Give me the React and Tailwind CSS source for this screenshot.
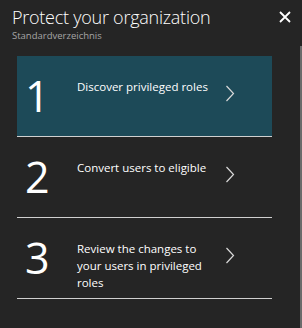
import React from 'react'

const steps = [
  { n: '1', text: 'Discover privileged roles', active: true },
  { n: '2', text: 'Convert users to eligible' },
  { n: '3', text: 'Review the changes to your users in privileged roles' },
]

function Chevron() {
  return (
    <svg width="10" height="17" viewBox="0 0 10 17" className="shrink-0">
      <path d="M1.5 1 L8.5 8.5 L1.5 16" fill="none" stroke="#d8d8d8" strokeWidth="1.2" />
    </svg>
  )
}

export default function App() {
  return (
    <div
      className="w-[302px] h-[328px] bg-[#252525] text-white flex overflow-hidden"
      style={{ fontFamily: '"Open Sans", "Noto Sans", sans-serif' }}
    >
      <div className="flex-1 flex flex-col">
        {/* Header */}
        <div className="flex items-start justify-between pl-3 pr-[9px] pt-[5px] h-[56px]">
          <div>
            <div className="text-[18px] font-light leading-[24px] tracking-[-0.25px]">Protect your organization</div>
            <div className="text-[9.5px] leading-[12px] text-[#a6a6a6] mt-[1px]">Standardverzeichnis</div>
          </div>
          <svg width="12" height="12" viewBox="0 0 12 12" className="mt-[6px]">
            <path d="M1 1 L11 11 M11 1 L1 11" stroke="#ffffff" strokeWidth="1.8" />
          </svg>
        </div>

        {/* Steps */}
        <div className="ml-[17px] w-[255px] flex flex-col">
          {steps.map((s) => (
            <div
              key={s.n}
              className={`h-[81px] border-b border-[#d0d0d0] flex items-start ${s.active ? 'bg-[#1d4a58]' : ''}`}
            >
              <div className="w-[60px] pl-[8px] pt-[16px] text-[43px] leading-[48px] font-normal">{s.n}</div>
              <div className="w-[146px] pt-[22px] text-[11.5px] leading-[17px]">{s.text}</div>
              <div className="pt-[29px] pl-[2px]">
                <Chevron />
              </div>
            </div>
          ))}
        </div>
      </div>
      {/* Scrollbar */}
      <div className="w-[2px] flex flex-col">
        <div className="h-[46px]"></div>
        <div className="flex-1 bg-[#6b6b6b]"></div>
      </div>
    </div>
  )
}
